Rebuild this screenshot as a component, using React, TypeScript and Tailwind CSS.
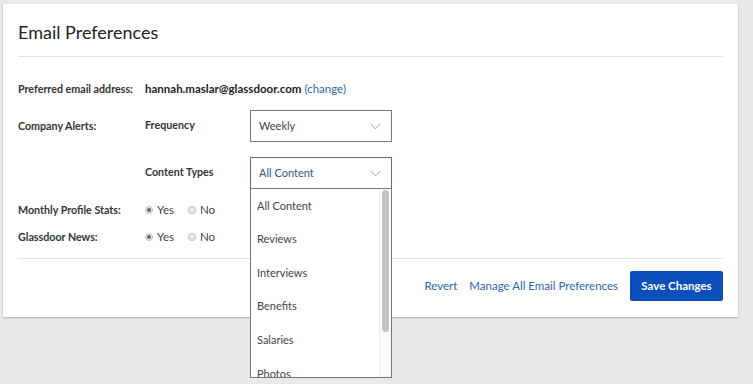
import React from "react";

const font = { fontFamily: "Lato, 'Open Sans', sans-serif" };

function Chevron({ color }: { color: string }) {
    return (
        <svg width="11" height="7" viewBox="0 0 11 7" className="shrink-0">
            <path d="M0.5 0.8 L5.5 5.8 L10.5 0.8" fill="none" stroke={color} strokeWidth="1" />
        </svg>
    );
}

function Radio({ checked }: { checked: boolean }) {
    return (
        <span className="w-[8px] h-[8px] rounded-full border border-[#bdbdbd] bg-[#ececec] flex items-center justify-center shrink-0">
            {checked && <span className="w-[4px] h-[4px] rounded-full bg-[#666]" />}
        </span>
    );
}

function YesNo() {
    return (
        <div className="flex items-center text-[11.5px] text-[#444]">
            <Radio checked={true} />
            <span className="ml-[4px]">Yes</span>
            <span className="ml-[14px]"><Radio checked={false} /></span>
            <span className="ml-[4px]">No</span>
        </div>
    );
}

export default function App() {
    const options = ["All Content", "Reviews", "Interviews", "Benefits", "Salaries", "Photos"];

    return (
        <div className="w-[753px] h-[384px] bg-[#e9e9e9] pt-[4px] pl-[3px] overflow-hidden" style={font}>
            <div className="w-[735px] h-[313px] bg-white shadow-[0_1px_2px_rgba(0,0,0,0.25)] px-[15px]">
                <div className="h-[53px] flex items-center border-b border-[#e3e3e3]">
                    <h1 className="text-[18px] text-[#222] leading-none pt-[3px]">Email Preferences</h1>
                </div>

                <div className="flex items-center h-[20px] mt-[22px]">
                    <span className="w-[127px] text-[10.7px] font-bold text-[#333]">Preferred email address:</span>
                    <span className="text-[11.5px] font-bold text-[#222]">hannah.maslar@glassdoor.com</span>
                    <a className="ml-[3px] text-[11.5px] text-[#2d65a8]">(change)</a>
                </div>

                <div className="flex items-center h-[32px] mt-[11px] text-[10.7px]">
                    <span className="w-[127px] font-bold text-[#333]">Company Alerts:</span>
                    <span className="w-[105px] font-bold text-[#333] -mt-[2px]">Frequency</span>
                    <div className="w-[142px] h-[32px] border border-[#777] flex items-center justify-between pl-[8px] pr-[10px] text-[11px] text-[#444]">
                        <span>Weekly</span>
                        <Chevron color="#999" />
                    </div>
                </div>

                <div className="flex items-center h-[32px] mt-[15px] text-[10.7px]">
                    <span className="w-[127px]" />
                    <span className="w-[105px] font-bold text-[#333] -mt-[2px]">Content Types</span>
                    <div className="relative w-[142px] h-[32px]">
                        <div className="w-[142px] h-[32px] border border-[#5b6b7b] flex items-center justify-between pl-[8px] pr-[10px] text-[11px] text-[#34557c]">
                            <span>All Content</span>
                            <Chevron color="#8fa5bd" />
                        </div>
                        <div className="absolute left-0 top-[31px] w-[142px] h-[190px] border border-[#777] bg-white z-10 overflow-hidden flex">
                            <div className="flex-1">
                                {options.map((o) => (
                                    <div key={o} className="h-[33.6px] flex items-center pl-[6px] text-[11px] text-[#444]">
                                        {o}
                                    </div>
                                ))}
                            </div>
                            <div className="w-[12px] h-full bg-[#fafafa] border-l border-[#ececec] pt-[1px] flex justify-center">
                                <div className="w-[7px] h-[142px] rounded-full bg-[#c2c2c2]" />
                            </div>
                        </div>
                    </div>
                </div>

                <div className="flex items-center h-[16px] mt-[13px] text-[10.7px]">
                    <span className="w-[127px] font-bold text-[#333]">Monthly Profile Stats:</span>
                    <YesNo />
                </div>

                <div className="flex items-center h-[16px] mt-[11px] text-[10.7px]">
                    <span className="w-[127px] font-bold text-[#333]">Glassdoor News:</span>
                    <YesNo />
                </div>

                <div className="border-b border-[#e3e3e3] mt-[13px]" />

                <div className="flex items-center justify-end pt-[12px] text-[11.5px]">
                    <a className="text-[#2d65a8]">Revert</a>
                    <a className="ml-[12px] text-[#2d65a8]">Manage All Email Preferences</a>
                    <button className="ml-[12px] w-[93px] h-[30px] bg-[#0d4fba] rounded-[2px] text-white font-bold text-[11.5px]">
                        Save Changes
                    </button>
                </div>
            </div>
        </div>
    );
}
